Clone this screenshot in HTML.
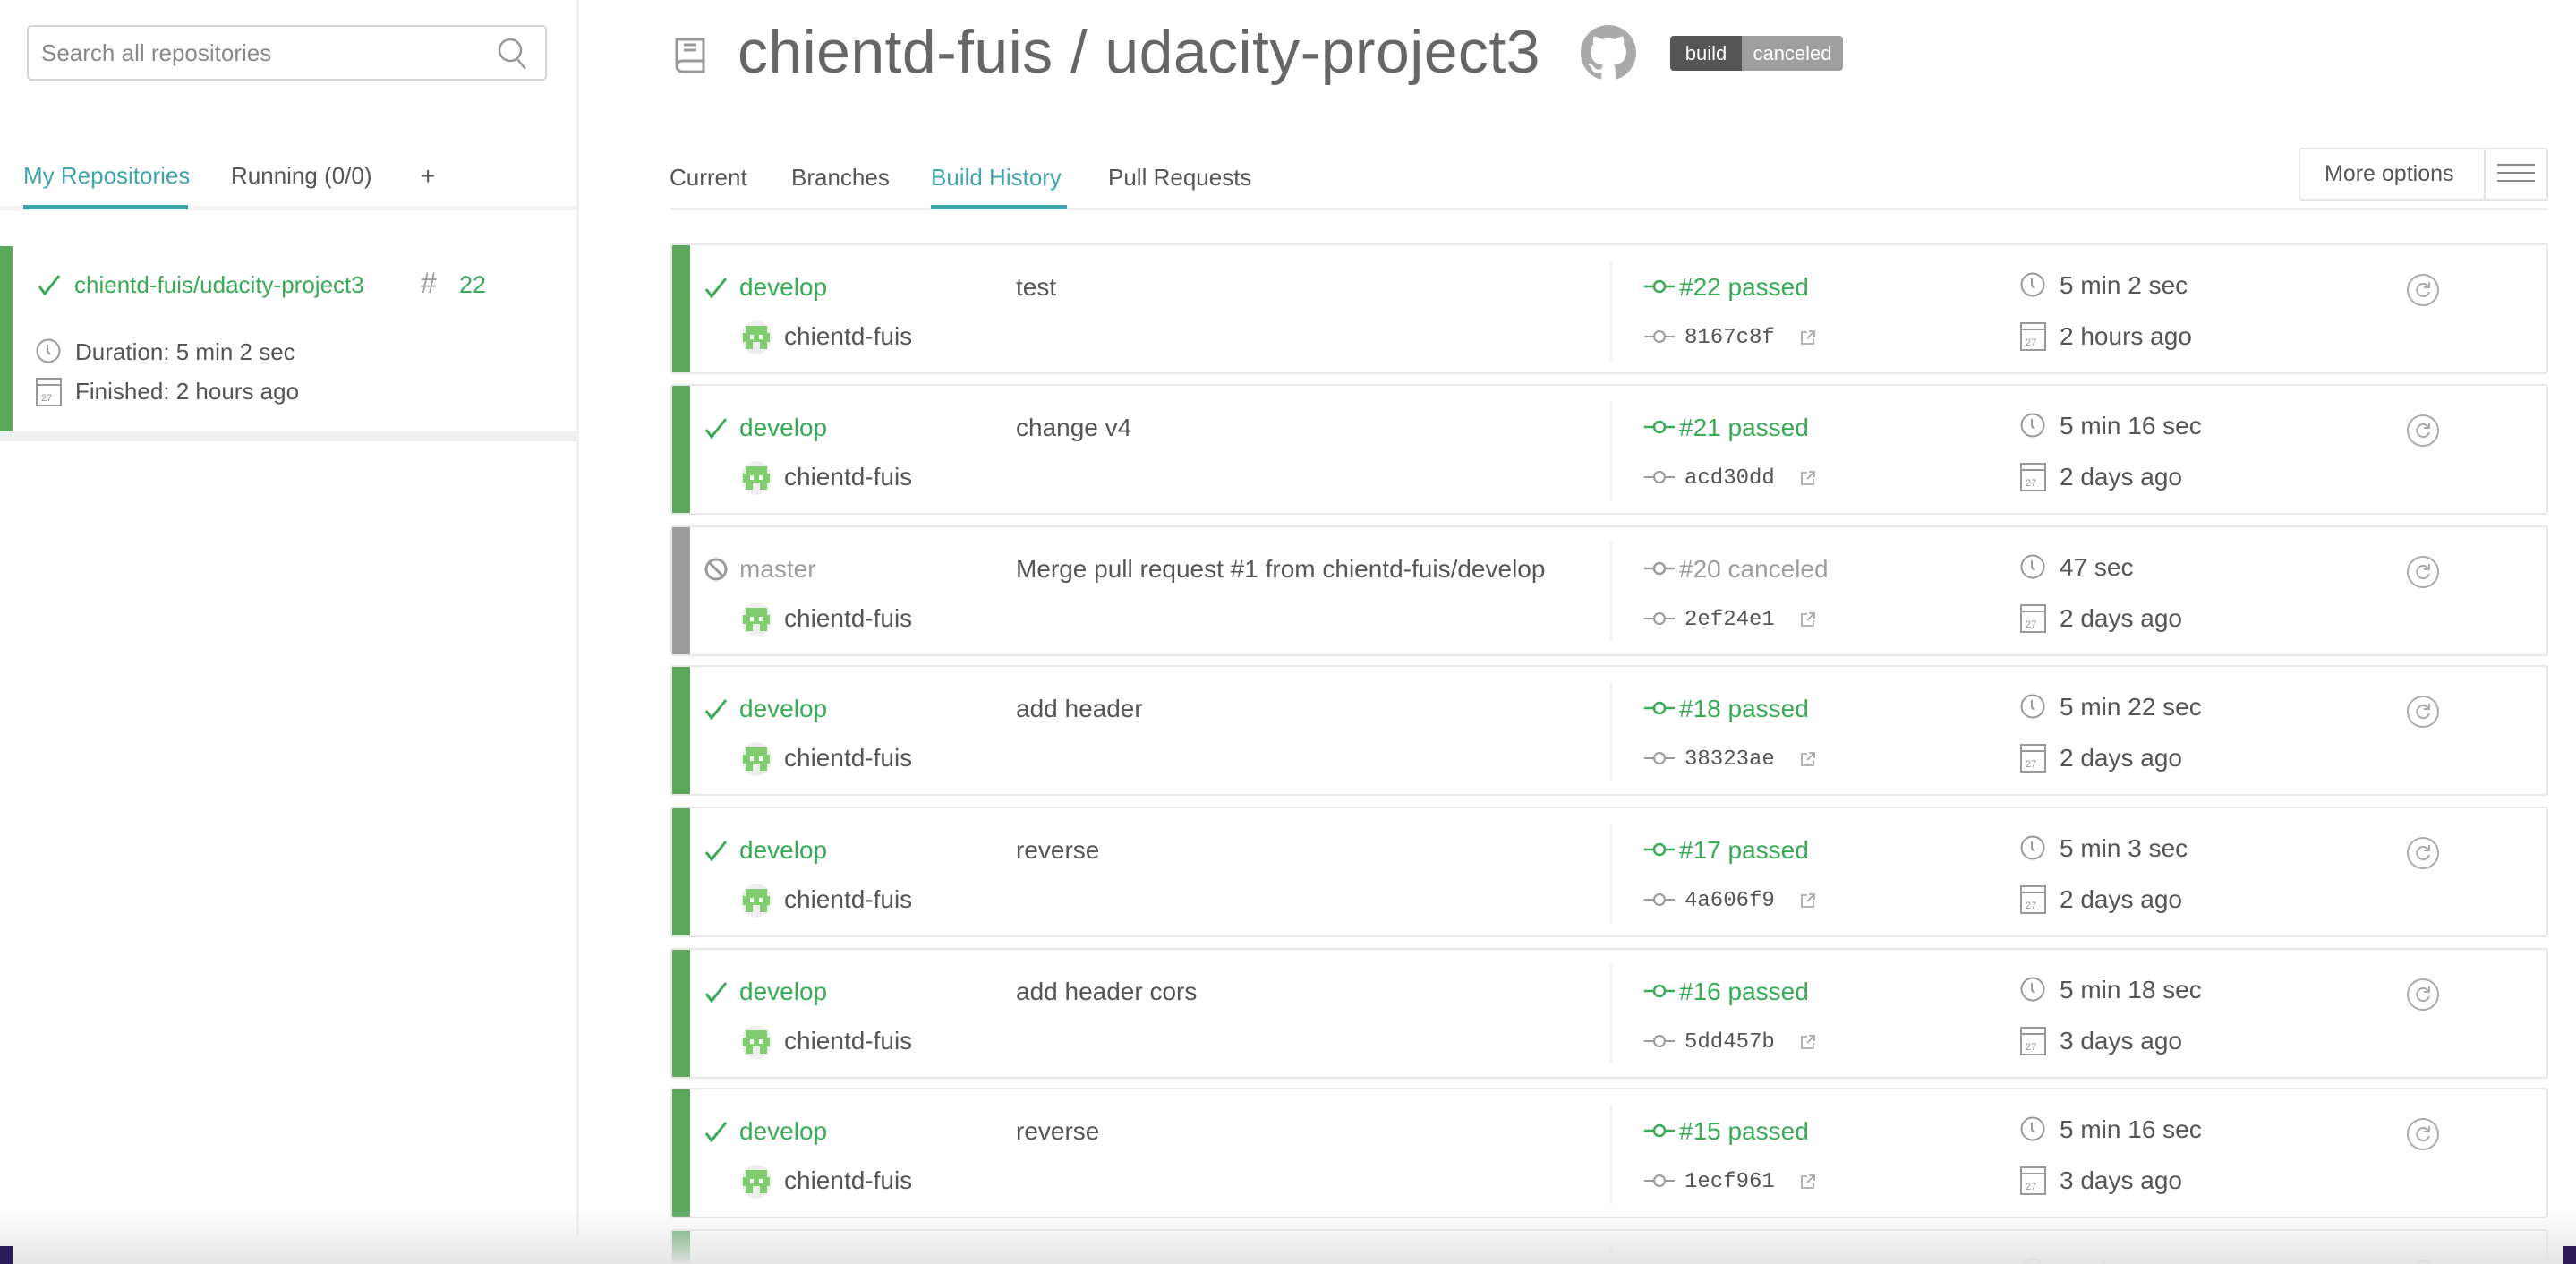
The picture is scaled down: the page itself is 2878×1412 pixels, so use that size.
<!DOCTYPE html>
<html><head><meta charset="utf-8"><style>
*{margin:0;padding:0;box-sizing:border-box}
html,body{width:2878px;height:1412px;overflow:hidden}
body{background:#fff;font-family:"Liberation Sans",sans-serif;color:#666;position:relative}
#wrap{position:absolute;left:0;top:0;width:2878px;height:1412px;overflow:hidden}
.a{position:absolute;white-space:nowrap}
.g{color:#39aa56}
.row{position:absolute;left:749px;width:2098px;height:146px;border:2px solid #e8e8e8;border-radius:3px;background:#fff;overflow:hidden}
.row .bar{position:absolute;left:-2px;top:-2px;bottom:-2px;width:22px;background:#5ba75e}
.row .t{position:absolute;white-space:nowrap;font-size:28px;line-height:32px}
.mono{font-family:"Liberation Mono",monospace;font-size:24px!important}
.div{position:absolute;left:1048px;top:17px;width:2px;height:111px;background:#eee}
</style></head><body><div id="wrap">
<div class="a" style="left:644px;top:0;width:3px;height:1380px;background:#f1f1f1"></div>
<div class="a" style="left:30px;top:28px;width:581px;height:62px;border:2px solid #d4d4d4;border-radius:5px"></div>
<div class="a" style="left:46px;top:44px;font-size:26px;color:#888">Search all repositories</div>
<svg class="a" style="left:555px;top:40px" width="36" height="40" viewBox="0 0 36 40"><circle cx="15" cy="16" r="12" fill="none" stroke="#999" stroke-width="2.5"/><path d="M23 26l9 11" stroke="#999" stroke-width="2.5"/></svg>
<div class="a" style="left:26px;top:181px;font-size:26px;color:#40a4ad">My Repositories</div>
<div class="a" style="left:258px;top:181px;font-size:26px;color:#555">Running (0/0)</div>
<div class="a" style="left:470px;top:181px;font-size:28px;color:#555">+</div>
<div class="a" style="left:0;top:230px;width:644px;height:5px;background:#f1f1f1"></div>
<div class="a" style="left:26px;top:229px;width:184px;height:5px;background:#40a4ad"></div>
<div class="a" style="left:0;top:275px;width:14px;height:207px;background:#5ba75e"></div>
<div class="a" style="left:0;top:482px;width:644px;height:11px;background:#eee"></div>
<svg class="a" style="left:40px;top:303px" width="30" height="30" viewBox="0 0 30 30"><path d="M4 17l6 8L26 5" fill="none" stroke="#39aa56" stroke-width="3"/></svg>
<div class="a g" style="left:83px;top:303px;font-size:26px">chientd-fuis/udacity-project3</div>
<div class="a" style="left:470px;top:298px;font-size:32px;color:#999">#</div>
<div class="a g" style="left:513px;top:303px;font-size:27px">22</div>
<svg class="a" style="left:39px;top:377px" width="30" height="30" viewBox="0 0 30 30"><circle cx="15" cy="15" r="12.5" fill="none" stroke="#999" stroke-width="2"/><path d="M14 8v8l3 3" fill="none" stroke="#999" stroke-width="2"/></svg>
<div class="a" style="left:84px;top:378px;font-size:26px;color:#555">Duration: 5 min 2 sec</div>
<svg class="a" style="left:40px;top:422px" width="30" height="32" viewBox="0 0 30 32"><rect x="1" y="1" width="27" height="30" fill="none" stroke="#999" stroke-width="2"/><path d="M1 8h27" stroke="#999" stroke-width="2"/><text x="6" y="26" font-size="11" fill="#999" font-family="Liberation Sans">27</text></svg>
<div class="a" style="left:84px;top:422px;font-size:26px;color:#555">Finished: 2 hours ago</div>

<svg class="a" style="left:752px;top:40px" width="42" height="48" viewBox="0 0 42 48"><path d="M4 4h30v36H10a6 6 0 0 1-6-6z M4 34a6 6 0 0 1 6-6h24" fill="none" stroke="#999" stroke-width="3"/><path d="M12 10h14M12 16h14" stroke="#999" stroke-width="3"/></svg>
<div class="a" style="left:824px;top:19px;font-size:68px;color:#666;letter-spacing:0.4px">chientd-fuis / udacity-project3</div>
<svg class="a" style="left:1766px;top:28px" width="62" height="62" viewBox="0 0 16 16"><path fill="#aaa" d="M8 0C3.58 0 0 3.58 0 8c0 3.54 2.29 6.53 5.47 7.590.4.07.55-.17.55-.38 0-.19-.01-.82-.01-1.49-2.01.37-2.53-.49-2.69-.94-.09-.23-.48-.94-.82-1.13-.28-.15-.68-.52-.01-.53.63-.01 1.08.58 1.23.82.72 1.21 1.87.87 2.33.66.07-.52.28-.87.51-1.07-1.78-.2-3.64-.89-3.64-3.95 0-.87.31-1.59.82-2.15-.08-.2-.36-1.02.08-2.12 0 0 .67-.21 2.2.82.64-.18 1.32-.27 2-.27.68 0 1.36.09 2 .27 1.53-1.04 2.2-.82 2.2-.82.44 1.1.16 1.92.08 2.12.51.56.82 1.27.82 2.15 0 3.07-1.87 3.75-3.65 3.95.29.25.54.73.54 1.48 0 1.07-.01 1.93-.01 2.2 0 .21.15.46.55.38A8.013 8.013 0 0016 8c0-4.42-3.58-8-8-8z"/></svg>
<div class="a" style="left:1866px;top:40px;width:193px;height:39px;border-radius:4px;overflow:hidden;font-size:22px;color:#fff;display:flex">
<div style="background:#555;width:80px;text-align:center;line-height:39px">build</div><div style="background:#9f9f9f;flex:1;text-align:center;line-height:39px">canceled</div></div>

<div class="a" style="left:748px;top:183px;font-size:26px;color:#555">Current</div>
<div class="a" style="left:884px;top:183px;font-size:26px;color:#555">Branches</div>
<div class="a" style="left:1040px;top:183px;font-size:26px;color:#40a4ad">Build History</div>
<div class="a" style="left:1238px;top:183px;font-size:26px;color:#555">Pull Requests</div>
<div class="a" style="left:749px;top:232px;width:2098px;height:3px;background:#eee"></div>
<div class="a" style="left:1040px;top:229px;width:152px;height:5px;background:#40a4ad"></div>
<div class="a" style="left:2568px;top:165px;width:279px;height:59px;border:2px solid #e4e4e4;border-radius:3px"></div>
<div class="a" style="left:2775px;top:167px;width:2px;height:55px;background:#e4e4e4"></div>
<div class="a" style="left:2597px;top:180px;font-size:25px;color:#555">More options</div>
<div class="a" style="left:2790px;top:183px;width:42px;height:2px;background:#888;box-shadow:0 9px 0 #888,0 18px 0 #888"></div>

<div id="rows"></div>
<script>
var D=[
["develop","test","#22 passed","8167c8f","5 min 2 sec","2 hours ago",1],
["develop","change v4","#21 passed","acd30dd","5 min 16 sec","2 days ago",1],
["master","Merge pull request #1 from chientd-fuis/develop","#20 canceled","2ef24e1","47 sec","2 days ago",0],
["develop","add header","#18 passed","38323ae","5 min 22 sec","2 days ago",1],
["develop","reverse","#17 passed","4a606f9","5 min 3 sec","2 days ago",1],
["develop","add header cors","#16 passed","5dd457b","5 min 18 sec","3 days ago",1],
["develop","reverse","#15 passed","1ecf961","5 min 16 sec","3 days ago",1],
["develop","","","","5 min 3 sec","",1]];
var tops=[272,429,587,743,901,1059,1215,1373],h="";
var inv='<svg class="t" style="left:76px;top:84px" width="36" height="38" viewBox="0 0 36 38"><ellipse cx="18" cy="19" rx="17" ry="19" fill="#eee"/><path fill="#7fcd6f" d="M6 6h24v8H6zM3 14h30v10H3zM6 24h8v8H6zM22 24h8v8h-8zM14 14h2v4h-2zM20 14h2v4h-2z"/><path fill="#fff" d="M11 16h4v5h-4zM21 16h4v5h-4z"/></svg>';
D.forEach(function(d,i){var T=tops[i],ok=d[6],c=ok?"#39aa56":"#9d9d9d";
var H=i==7?39:146;
h+='<div class="row" style="top:'+T+'px;height:'+H+'px"><div class="bar" style="background:'+(ok?'#5ba75e':'#9d9d9d')+'"></div>';
h+=ok?'<svg class="t" style="left:34px;top:32px" width="30" height="30" viewBox="0 0 30 30"><path d="M4 17l6 8L26 5" fill="none" stroke="#39aa56" stroke-width="3"/></svg>'
:'<svg class="t" style="left:35px;top:33px" width="28" height="28" viewBox="0 0 28 28"><circle cx="14" cy="14" r="11" fill="none" stroke="#999" stroke-width="3"/><path d="M6 6l16 16" stroke="#999" stroke-width="3"/></svg>';
h+='<div class="t" style="left:75px;top:31px;color:'+c+'">'+d[0]+'</div>';
h+=inv+'<div class="t" style="left:125px;top:86px;color:#555">chientd-fuis</div>';
h+='<div class="t" style="left:384px;top:31px;color:#555">'+d[1]+'</div><div class="div"></div>';
if(d[2]){h+='<svg class="t" style="left:1086px;top:38px" width="34" height="16" viewBox="0 0 34 16"><path d="M0 8h10M24 8h10" stroke="'+c+'" stroke-width="2.5"/><circle cx="17" cy="8" r="6" fill="none" stroke="'+c+'" stroke-width="2.5"/></svg>';
h+='<div class="t" style="left:1125px;top:31px;color:'+c+'">'+d[2]+'</div>';
h+='<svg class="t" style="left:1086px;top:94px" width="34" height="16" viewBox="0 0 34 16"><path d="M0 8h10M24 8h10" stroke="#999" stroke-width="2"/><circle cx="17" cy="8" r="6" fill="none" stroke="#999" stroke-width="2"/></svg>';
h+='<div class="t mono" style="left:1131px;top:88px;color:#555">'+d[3]+'</div>';
h+='<svg class="t" style="left:1260px;top:94px" width="18" height="18" viewBox="0 0 18 18"><path d="M8 3H2v13h13v-6M10 2h6v6M16 2L8 10" fill="none" stroke="#aaa" stroke-width="1.8"/></svg>';}
h+='<svg class="t" style="left:1505px;top:29px" width="30" height="30" viewBox="0 0 30 30"><circle cx="15" cy="15" r="12.5" fill="none" stroke="#999" stroke-width="2"/><path d="M14 8v8l3 3" fill="none" stroke="#999" stroke-width="2"/></svg>';
h+='<div class="t" style="left:1550px;top:29px;color:#555">'+d[4]+'</div>';
if(d[5]){h+='<svg class="t" style="left:1506px;top:86px" width="30" height="32" viewBox="0 0 30 32"><rect x="1" y="1" width="27" height="30" fill="none" stroke="#999" stroke-width="2"/><path d="M1 8h27" stroke="#999" stroke-width="2"/><text x="6" y="26" font-size="11" fill="#999" font-family="Liberation Sans">27</text></svg>';
h+='<div class="t" style="left:1550px;top:86px;color:#555">'+d[5]+'</div>';}
h+='<svg class="t" style="left:1936px;top:30px" width="40" height="40" viewBox="0 0 40 40"><circle cx="20" cy="20" r="17" fill="none" stroke="#aaa" stroke-width="2"/><path d="M26 16a7 7 0 1 0 1 6" fill="none" stroke="#aaa" stroke-width="2"/><path d="M27 11v6h-6" fill="none" stroke="#aaa" stroke-width="2"/></svg>';
h+='</div>';});
document.getElementById('rows').innerHTML=h;
</script>
<div class="a" style="left:0;top:1350px;width:2878px;height:62px;background:linear-gradient(rgba(255,255,255,0),rgba(228,228,228,0.95))"></div>
<div class="a" style="left:0;top:1392px;width:14px;height:20px;background:#2a1a55"></div>
<div class="a" style="left:2864px;top:1392px;width:14px;height:20px;background:#2a1a55"></div>
</div></body></html>
